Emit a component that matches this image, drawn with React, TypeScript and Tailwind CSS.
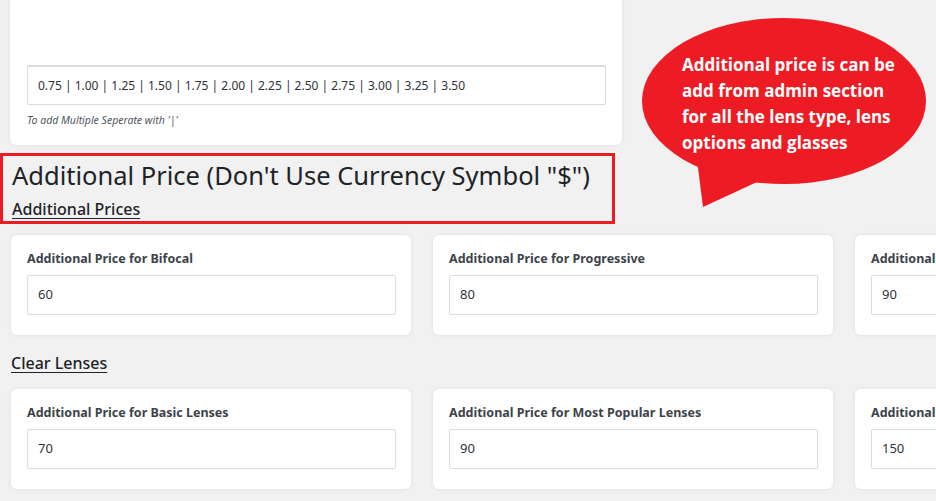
import React from "react";

const FONT = { fontFamily: '"Noto Sans", "Open Sans", sans-serif' };

const rowOne = [
  { label: "Additional Price for Bifocal", value: "60" },
  { label: "Additional Price for Progressive", value: "80" },
  { label: "Additional Price for Reading", value: "90" },
];

const rowTwo = [
  { label: "Additional Price for Basic Lenses", value: "70" },
  { label: "Additional Price for Most Popular Lenses", value: "90" },
  { label: "Additional Price for Premium Lenses", value: "150" },
];

function PriceCard({ label, value }: { label: string; value: string }) {
  return (
    <div className="w-[400px] shrink-0 rounded-md bg-white px-4 pt-[16px] pb-[20px] shadow-[0_0_4px_rgba(0,0,0,0.08)]">
      <div className="text-[12.5px] font-bold leading-[16px] text-[#3c434a] whitespace-nowrap">{label}</div>
      <div className="mt-[8px] flex h-[40px] w-[369px] items-center rounded-[2px] border border-[#dcdcde] px-[10px] text-[13px] text-[#2c3338]">
        {value}
      </div>
    </div>
  );
}

function Bubble() {
  return (
    <div className="absolute left-[630px] top-0 h-[215px] w-[306px]">
      <svg width="306" height="215" viewBox="0 0 306 215" className="absolute left-0 top-0">
        <ellipse cx="154" cy="101" rx="142" ry="83" fill="#ed1c24" />
        <polygon points="67,160 73,207 127,182" fill="#ed1c24" />
      </svg>
      <div
        className="absolute left-[52px] top-[52px] w-[221px] text-[17px] font-bold leading-[26px] text-white"
        style={{ fontFamily: '"Open Sans", "Noto Sans", sans-serif' }}
      >
        Additional price is can be add from admin section for all the lens type, lens options and glasses
      </div>
    </div>
  );
}

export default function App() {
  return (
    <div className="relative h-[501px] w-[936px] overflow-hidden bg-[#f1f1f1]" style={FONT}>
      <div className="ml-[10px] w-[612px] rounded-b-md bg-white px-[17px] pt-[65px] pb-[19px] shadow-[0_0_4px_rgba(0,0,0,0.08)]">
        <div className="flex h-[40px] w-[579px] items-center rounded-[2px] border border-t-2 border-[#dcdcde] px-[10px] text-[12px] text-[#2c3338]">
          0.75 | 1.00 | 1.25 | 1.50 | 1.75 | 2.00 | 2.25 | 2.50 | 2.75 | 3.00 | 3.25 | 3.50
        </div>
        <div className="mt-[9px] text-[10.5px] italic leading-[12px] text-[#50575e]">To add Multiple Seperate with '|'</div>
      </div>

      <div className="mt-[8px] w-[615px] border-[3px] border-[#ed1c24] px-[9px] pt-[3px] pb-0">
        <h1 className="text-[25.5px] leading-[32px] text-[#1d2327] whitespace-nowrap">
          Additional Price (Don't Use Currency Symbol "$")
        </h1>
        <div className="mt-[6px] text-[16px] font-medium leading-[24px] text-[#1d2327] underline underline-offset-[3px]">
          Additional Prices
        </div>
      </div>

      <div className="ml-[11px] mt-[11px] flex gap-[22px]">
        {rowOne.map((c) => (
          <PriceCard key={c.label} {...c} />
        ))}
      </div>

      <div className="ml-[11px] mt-[16px] text-[16px] font-medium leading-[24px] text-[#1d2327] underline underline-offset-[3px]">
        Clear Lenses
      </div>

      <div className="ml-[11px] mt-[14px] flex gap-[22px]">
        {rowTwo.map((c) => (
          <PriceCard key={c.label} {...c} />
        ))}
      </div>

      <Bubble />
    </div>
  );
}
